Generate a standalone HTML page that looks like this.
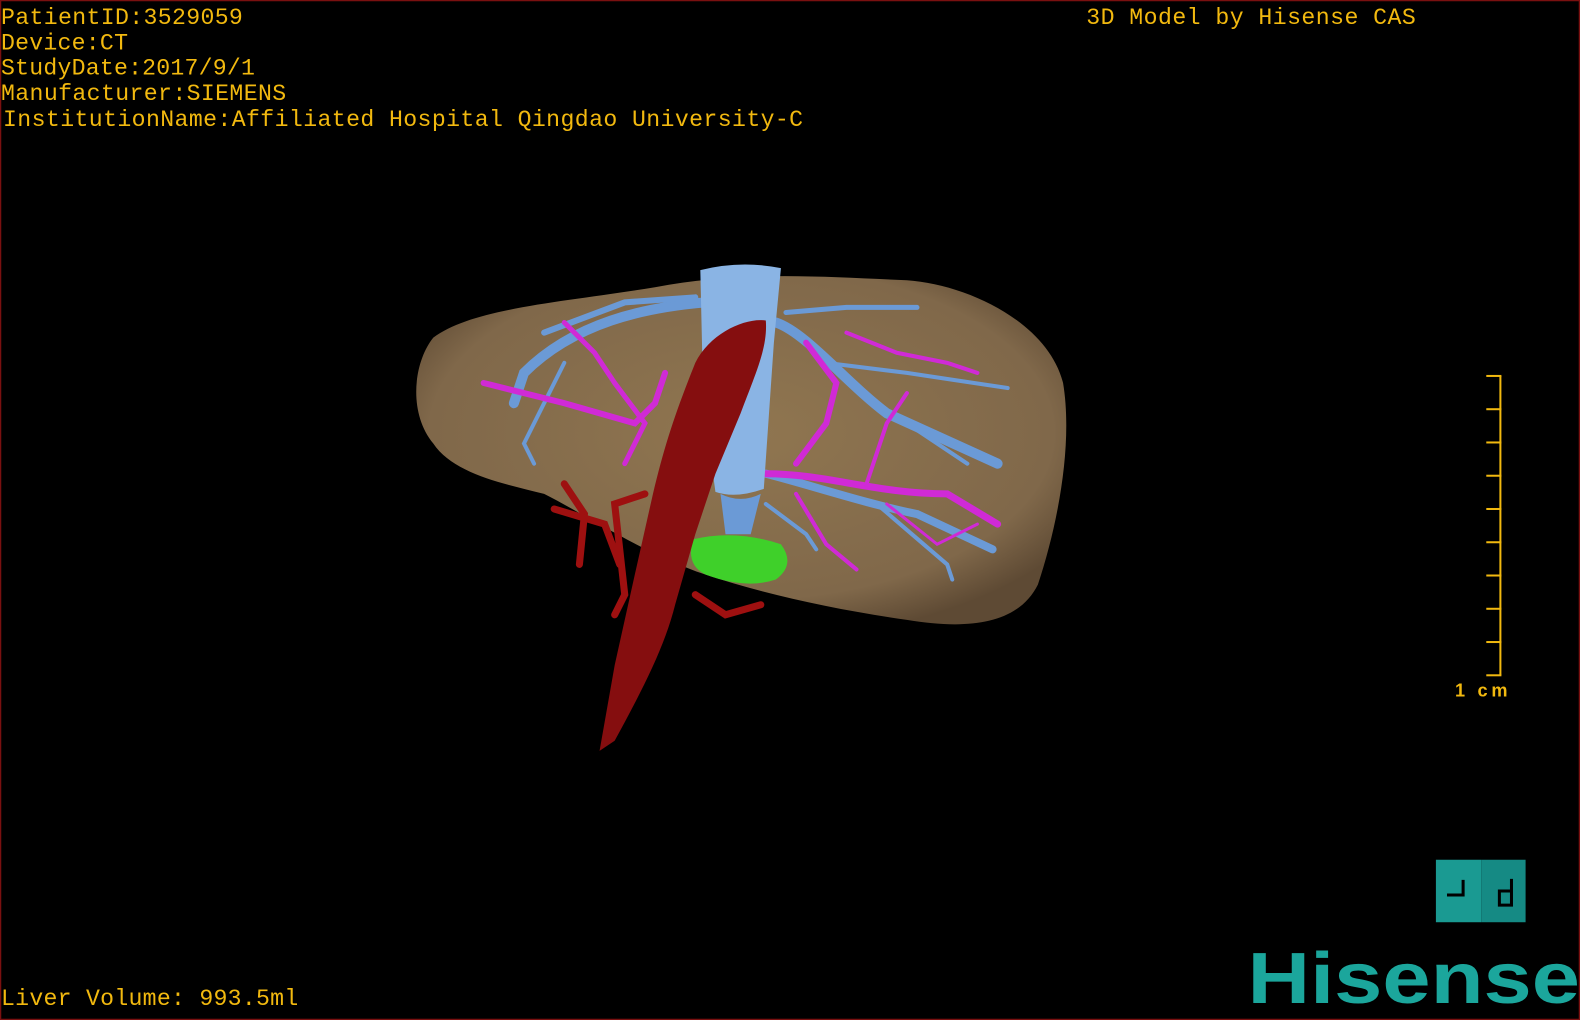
<!DOCTYPE html>
<html><head><meta charset="utf-8"><style>
html,body{margin:0;padding:0;background:#000;width:1580px;height:1020px;overflow:hidden}
svg{display:block}
text{font-family:"Liberation Mono",monospace;fill:#f2b90f}
</style></head><body>
<svg width="1580" height="1020" viewBox="0 0 1568 1012" preserveAspectRatio="none">
<rect x="0.5" y="0.5" width="1567" height="1011" fill="#000" stroke="#7a1010" stroke-width="1.5"/>
<g font-size="23">
<text x="1" y="24" textLength="240">PatientID:3529059</text>
<text x="1" y="49" textLength="126">Device:CT</text>
<text x="1" y="74" textLength="252">StudyDate:2017/9/1</text>
<text x="1" y="99" textLength="283">Manufacturer:SIEMENS</text>
<text x="3" y="125" textLength="794">InstitutionName:Affiliated Hospital Qingdao University-C</text>
<text x="1078" y="24" textLength="327">3D Model by Hisense CAS</text>
<text x="1" y="997" textLength="295">Liver Volume: 993.5ml</text>
</g>
<defs><radialGradient id="lg" cx="0.5" cy="0.45" r="0.6"><stop offset="0" stop-color="#907650"/><stop offset="0.8" stop-color="#80684a"/><stop offset="1" stop-color="#5e4a34"/></radialGradient></defs>
<path d="M430 335 C470 305 560 300 650 285 C740 268 820 275 900 278 C960 282 1040 320 1055 380 C1065 440 1050 520 1030 580 C1010 620 960 625 900 615 C830 605 760 590 700 570 C640 550 580 510 540 490 C500 480 450 470 430 440 C405 410 410 360 430 335 Z" fill="url(#lg)"/>
<g stroke="#6b9ad6" stroke-linecap="round" fill="none">
<path d="M700 300 C640 305 570 320 520 370 L510 400" stroke-width="10"/>
<path d="M690 295 L620 300 L540 330" stroke-width="6"/>
<path d="M560 360 L520 440 L530 460" stroke-width="4"/>
<path d="M770 320 C800 330 840 380 880 410 L990 460" stroke-width="10"/>
<path d="M780 310 L840 305 L910 305" stroke-width="5"/>
<path d="M820 360 L900 370 L1000 385" stroke-width="4"/>
<path d="M760 470 C800 480 860 500 910 510 L985 545" stroke-width="8"/>
<path d="M870 500 L940 560 L945 575" stroke-width="4"/>
<path d="M760 500 L800 530 L810 545" stroke-width="4"/>
<path d="M900 420 L960 460" stroke-width="4"/>
</g>
<g stroke="#d02ad6" stroke-linecap="round" fill="none">
<path d="M480 380 L560 400 L630 420 L650 400 L660 370" stroke-width="6"/>
<path d="M560 320 L590 350 L610 380 L640 420 L620 460" stroke-width="5"/>
<path d="M760 470 C820 470 870 490 940 490 L990 520" stroke-width="7"/>
<path d="M790 460 L820 420 L830 380 L800 340" stroke-width="6"/>
<path d="M840 330 L890 350 L940 360 L970 370" stroke-width="4"/>
<path d="M860 480 L880 420 L900 390" stroke-width="4"/>
<path d="M880 500 L930 540 L970 520" stroke-width="3"/>
<path d="M790 490 L820 540 L850 565" stroke-width="4"/>
</g>
<path d="M695 268 Q735 258 775 266 L768 340 L758 485 Q730 495 710 488 L698 400 Z" fill="#8ab4e4"/>
<path d="M715 490 Q735 500 755 490 L745 530 L720 530 Z" fill="#6b9ad6"/>
<path d="M688 535 Q730 525 775 540 Q790 560 770 575 Q740 585 700 570 Q680 560 688 535 Z" fill="#3fd02a"/>
<path d="M760 318 C740 315 705 330 690 360 C670 410 660 440 648 490 L630 570 L610 660 L595 745 L610 735 C640 680 660 640 670 600 L690 530 L710 470 L735 410 C750 370 762 345 760 318 Z" fill="#850e0f"/>
<g stroke="#9e1010" stroke-width="7" fill="none" stroke-linecap="round">
<path d="M560 480 L580 510 L575 560"/>
<path d="M550 505 L600 520 L615 560"/>
<path d="M640 490 L610 500 L620 590 L610 610"/>
<path d="M690 590 L720 610 L755 600"/>
</g>
<g stroke="#f2b90f" stroke-width="2">
<line x1="1489" y1="373" x2="1489" y2="670"/>
<line x1="1475" y1="373" x2="1490" y2="373"/><line x1="1475" y1="406" x2="1490" y2="406"/>
<line x1="1475" y1="439" x2="1490" y2="439"/><line x1="1475" y1="472" x2="1490" y2="472"/>
<line x1="1475" y1="505" x2="1490" y2="505"/><line x1="1475" y1="538" x2="1490" y2="538"/>
<line x1="1475" y1="571" x2="1490" y2="571"/><line x1="1475" y1="604" x2="1490" y2="604"/>
<line x1="1475" y1="637" x2="1490" y2="637"/><line x1="1475" y1="670" x2="1490" y2="670"/>
</g>
<text x="1444" y="691" style="font-family:'Liberation Sans',sans-serif;font-weight:bold" font-size="18" textLength="52" lengthAdjust="spacing">1 cm</text>
<rect x="1425" y="853" width="45" height="62" fill="#1a9a92"/>
<rect x="1470" y="853" width="44" height="62" fill="#158a84"/>
<path d="M1436 888 H1452 V873" stroke="#000" stroke-width="3" fill="none"/>
<path d="M1500 872 V898 H1488 V884 H1500" stroke="#000" stroke-width="3" fill="none"/>
<text x="1238" y="995" style="font-family:'Liberation Sans',sans-serif;font-weight:bold;fill:#1ba69c" font-size="72" textLength="330" lengthAdjust="spacingAndGlyphs">Hisense</text>
</svg>
</body></html>
